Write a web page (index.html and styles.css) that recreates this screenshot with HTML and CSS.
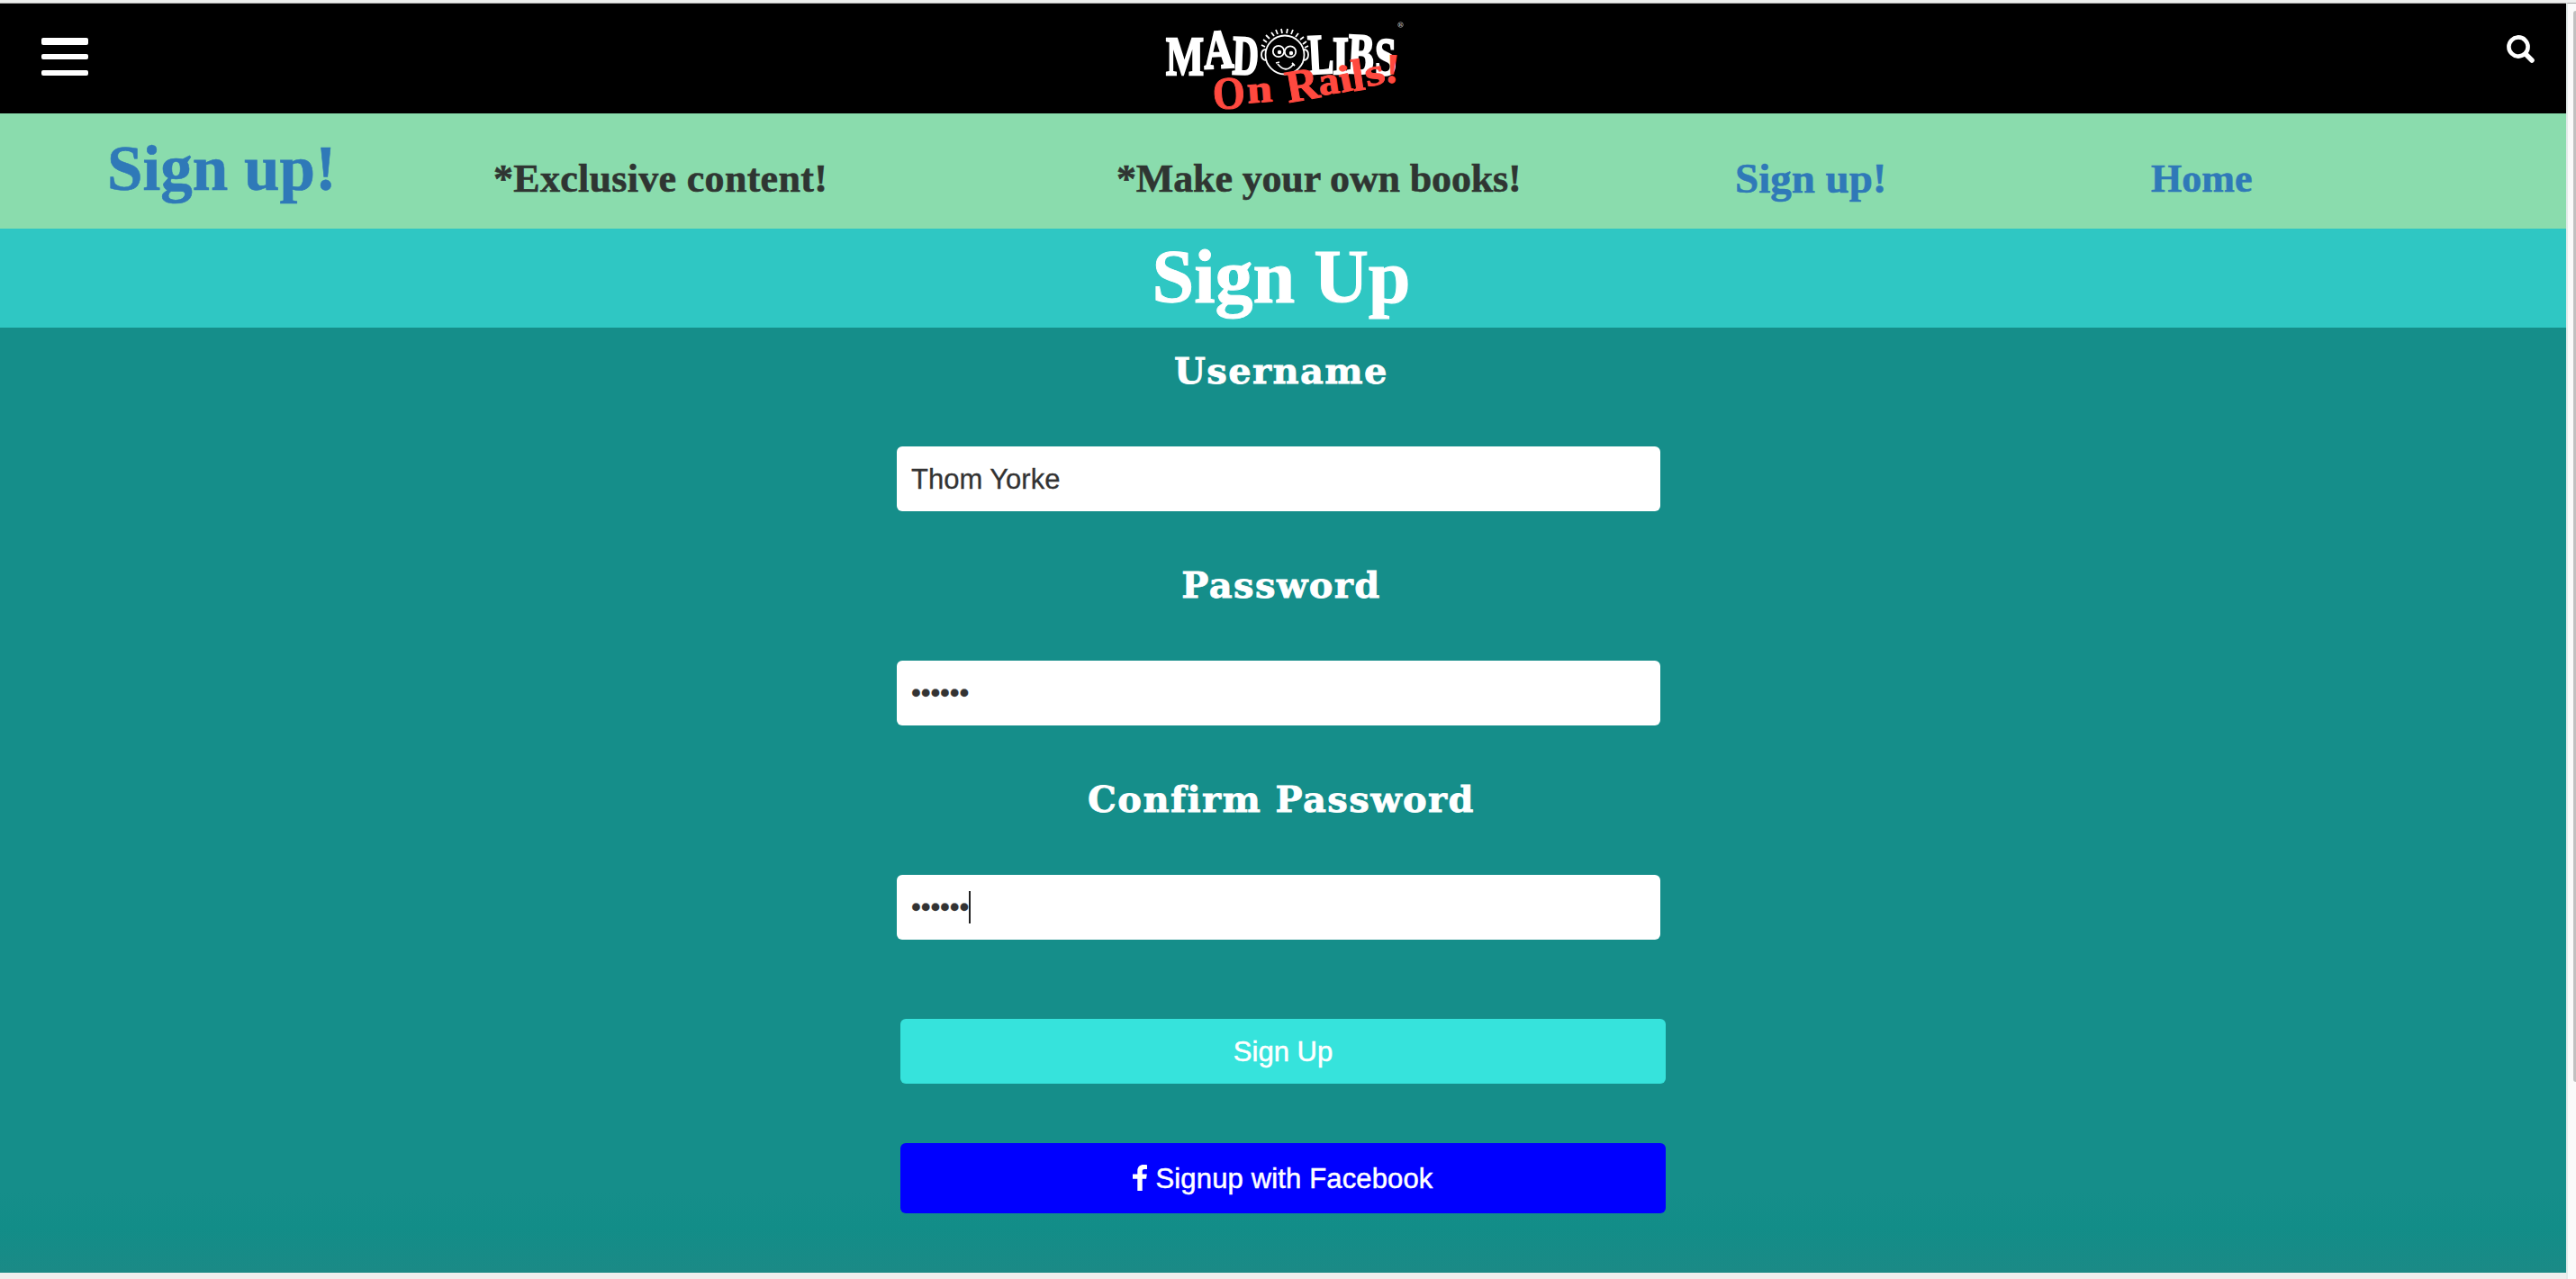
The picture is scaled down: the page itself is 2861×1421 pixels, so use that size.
FILE: index.html
```html
<!DOCTYPE html>
<html lang="en">
<head>
<meta charset="utf-8">
<title>Mad Libs On Rails! - Sign Up</title>
<link rel="stylesheet" href="styles.css">
</head>
<body>
<div class="window">
  <div class="page">
    <header class="topbar">
      <div class="menu"><span class="bar first"></span><span class="bar"></span><span class="bar"></span></div>
      <svg class="logo" viewBox="0 0 310 116" width="310" height="116">
        <g class="logo-main" transform="translate(0 9.500)">
          <text x="24" y="62" font-size="62" textLength="42" lengthAdjust="spacingAndGlyphs">M</text>
          <text x="66" y="55" font-size="61" textLength="33" lengthAdjust="spacingAndGlyphs" transform="rotate(-3 82 40)">A</text>
          <text x="98" y="62" font-size="62" textLength="29" lengthAdjust="spacingAndGlyphs" transform="rotate(2 112 40)">D</text>
          <text x="182" y="61" font-size="63" textLength="28" lengthAdjust="spacingAndGlyphs" transform="rotate(-3 196 40)">L</text>
          <text x="209" y="61" font-size="60" textLength="18" lengthAdjust="spacingAndGlyphs">I</text>
          <text x="226" y="61" font-size="64" textLength="29" lengthAdjust="spacingAndGlyphs" transform="rotate(3 240 40)">B</text>
          <text x="256" y="62" font-size="60" textLength="24" lengthAdjust="spacingAndGlyphs">S</text>
        </g>
        <g fill="none" stroke="#fff" stroke-width="1.8">
          <circle cx="156" cy="50" r="21.500"/>
          <path d="M135 44q-5 0-5 6t6 6M177 44q5 0 5 6t-6 6"/>
          <circle cx="149" cy="46" r="6.200"/><circle cx="162" cy="46.500" r="6.200"/>
          <path d="M148 60q9 11 17 1M146 59l4-1M164 59l3 3"/>
          <path d="M134 41l-4-2M136 36l-4-3M139 32l-4-4M144 29l-3-4M148 27l-2-5M153 26l-1-5M158 26l1-5M163 27l2-5M168 30l3-4M173 33l4-3M176 38l4-3M178 42l4-2"/>
          <circle cx="284.500" cy="16.500" r="2.800" stroke-width=".7" stroke="#bbb"/>
        </g>
        <circle cx="150" cy="47" r="2.200" fill="#fff"/><circle cx="163" cy="48" r="2.200" fill="#fff"/>
        <text class="mark" x="282.700" y="18.300" font-size="5">R</text>
        <g class="logo-sub" transform="translate(0 10.500)">
          <text x="76" y="99" font-size="51" textLength="36" lengthAdjust="spacingAndGlyphs" transform="rotate(-3 94 84)">O</text>
          <text x="114" y="92" font-size="43" textLength="28" lengthAdjust="spacingAndGlyphs" transform="rotate(-4 128 82)">n</text>
          <text x="157" y="90" font-size="51" textLength="37" lengthAdjust="spacingAndGlyphs" transform="rotate(-10 174 74)">R</text>
          <text x="193" y="83" font-size="44" textLength="23" lengthAdjust="spacingAndGlyphs" transform="rotate(-8 204 70)">a</text>
          <text x="216" y="80" font-size="42" textLength="14" lengthAdjust="spacingAndGlyphs" transform="rotate(-12 223 66)">i</text>
          <text x="230" y="79" font-size="50" textLength="14" lengthAdjust="spacingAndGlyphs" transform="rotate(-8 237 62)">l</text>
          <text x="245" y="73" font-size="42" textLength="22" lengthAdjust="spacingAndGlyphs" transform="rotate(-12 256 62)">s</text>
          <text x="268" y="70" font-size="46" textLength="15" lengthAdjust="spacingAndGlyphs" transform="rotate(4 275 56)">!</text>
        </g>
      </svg>
      <svg class="search" viewBox="0 0 31 31" width="31" height="31"><circle cx="13" cy="13" r="10.600" fill="none" stroke="#fff" stroke-width="4.600"/><path d="M21 21l7 7" stroke="#fff" stroke-width="5.500" stroke-linecap="round"/></svg>
    </header>
    <nav class="promo">
      <a class="promo-lead">Sign up!</a>
      <span class="promo-exclusive">*Exclusive content!</span>
      <span class="promo-books">*Make your own books!</span>
      <a class="promo-signup">Sign up!</a>
      <a class="promo-home">Home</a>
    </nav>
    <h1 class="title">Sign Up</h1>
    <main class="form">
      <label class="label">Username</label>
      <div class="field">Thom Yorke</div>
      <label class="label">Password</label>
      <div class="field dots">••••••</div>
      <label class="label">Confirm Password</label>
      <div class="field dots">••••••<span class="caret"></span></div>
      <div class="btn submit">Sign Up</div>
      <div class="btn facebook"><svg class="fb-icon" width="16" height="29" viewBox="0 0 16 29"><path fill="#fff" d="M16 .3v4.600h-2.800c-2.100 0-2.500 1-2.500 2.500v3.200h5.100l-.7 5.100h-4.400V29H5.300V15.700H0v-5.100h5.300V6.900C5.300 2.500 8 0 12 0c1.900 0 3.500.1 4 .3z"/></svg><span class="fb-text">Signup with Facebook</span></div>
    </main>
  </div>
  <aside class="scroll"><div class="thumb"></div></aside>
</div>
</body>
</html>
```
FILE: styles.css
```css
* { box-sizing: border-box; }
body { margin: 0; height: 1421px; overflow: hidden; background: #eeefee; font-family: "Liberation Sans", Arial, sans-serif; }
.window { display: flex; height: 1421px; padding-top: 3px; }
.page { width: 2850px; border-top: 1px solid #aaa; }
.topbar { height: 122px; padding: 0 35px 0 46px; background: #000; display: flex; justify-content: space-between; align-items: flex-start; }
.menu { width: 52px; margin-top: 38px; display: grid; row-gap: 12px; }
.bar { height: 6px; border-radius: 2px; background: #fff; }
.bar.first { height: 8px; margin-bottom: -2px; }
.logo { margin: 7px 0 0 -31px; font-family: "Liberation Serif", serif; font-weight: bold; overflow: visible; }
.logo-main { fill: #fff; stroke: #fff; stroke-width: 2.4px; }
.logo-sub { fill: #ff493f; stroke: #ff493f; stroke-width: 1px; }
.mark { fill: #bbb; }
.search { margin-top: 35px; }
.promo { height: 128px; background: #8adcad; color: #2f3532; display: grid; grid-template-columns: 429px 692px 687px 462px 1fr; padding: 20px 0 0 119px; align-items: start; font: bold 44px/106px "Liberation Serif", serif; white-space: nowrap; -webkit-text-stroke: .6px currentColor; }
.promo a { color: #2f79b8; }
.promo .promo-lead { font-size: 71px; line-height: 82px; }
.promo .promo-signup { font-size: 47px; line-height: 104px; }
.promo-exclusive { letter-spacing: .3px; }
.promo-books { letter-spacing: -.15px; }
.title { margin: 0; height: 110px; padding-right: 4px; background: #2fc7c3; color: #fff; font: bold 84px/108px "Liberation Serif", serif; text-align: center; -webkit-text-stroke: 1px #fff; }
.form { height: 1050px; padding: 16px 0 0 996px; background: linear-gradient(#158e8a 0 960px, #128d88 1000px, #1b8a86 1050px); display: flex; flex-direction: column; }
.label { width: 854px; height: 64px; color: #fff; font: bold 40px/64px "DejaVu Serif", serif; text-align: center; letter-spacing: 1.4px; -webkit-text-stroke: .8px #fff; }
.field { width: 848px; height: 72px; margin: 52px 0 50px; padding: 2px 0 0 16px; border-radius: 6px; background: #fff; color: #333; font-size: 31px; display: flex; align-items: center; -webkit-text-stroke: .3px currentColor; }
.dots { padding-top: 0; letter-spacing: -.15px; }
.caret { width: 2px; height: 36px; background: #222; }
.btn { width: 850px; margin-left: 4px; padding-top: 2px; border-radius: 6px; color: #fff; font-size: 31px; display: flex; align-items: center; justify-content: center; -webkit-text-stroke: .5px currentColor; }
.submit { height: 72px; margin-top: 38px; background: #36e3dc; }
.facebook { height: 78px; margin-top: 66px; gap: 9px; background: #00f; }
.fb-text { letter-spacing: .15px; }
.fb-icon { margin-bottom: 4px; }
.scroll { width: 11px; border-top: 1px solid #aaa; border-left: 2px solid #e4ebea; background: #fafafa; padding: 8px 0 0 6px; }
.thumb { height: 1190px; border-radius: 6px 0 0 6px; background: #c1c1c1; }
```
